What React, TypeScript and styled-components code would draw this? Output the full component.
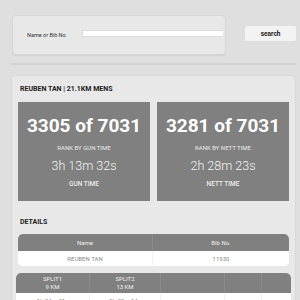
import React from "react";
import styled, { createGlobalStyle } from "styled-components";

const Global = createGlobalStyle`
  html, body { margin: 0; padding: 0; background: #e0dfdf; }
  body { font-family: Roboto, "Liberation Sans", Arial, sans-serif; overflow: hidden; }
  * { box-sizing: border-box; }
`;

const Page = styled.div`
  width: 300px;
  height: 300px;
  padding: 15px 4px 0 11px;
  overflow: hidden;
`;

const SearchRow = styled.div`
  display: flex;
  align-items: center;
  padding-left: 1px;
`;

const SearchPanel = styled.div`
  width: 215px;
  height: 40px;
  background: #e8e8e8;
  border: 1px solid #d6d6d6;
  border-radius: 4px;
  box-shadow: 0 1px 1px rgba(0, 0, 0, 0.06);
  display: flex;
  align-items: center;
  padding: 0 2px 0 14px;
  margin-bottom: -3px;
`;

const Label = styled.label`
  width: 55px;
  font-size: 5.5px;
  color: #333;
`;

const Input = styled.div`
  flex: 1;
  height: 7px;
  margin-top: -3px;
  background: #fff;
  border: 1px solid #ddd;
  border-right: none;
`;

const SearchButton = styled.button`
  margin-left: 19px;
  width: 51px;
  height: 15px;
  background: #f3f3f3;
  border: none;
  border-radius: 2px;
  font-family: inherit;
  font-weight: 700;
  font-size: 6.5px;
  color: #222;
  padding: 0;
`;

const Divider = styled.div`
  margin-top: 11px;
  height: 2px;
  width: 285px;
  background: #d3d3d3;
`;

const Card = styled.div`
  margin-top: 10px;
  width: 285px;
  background: #e8e8e8;
  border: 1px solid #d9d9d9;
  border-radius: 4px;
  padding: 7px 6px 20px 6px;
`;

const Heading = styled.div<{ $top?: number }>`
  margin-top: ${(p) => p.$top ?? 0}px;
  padding-left: 2px;
  font-size: 7px;
  line-height: 10px;
  font-weight: 700;
  color: #1c1c1c;
`;

const Boxes = styled.div`
  margin-top: 8px;
  display: grid;
  grid-template-columns: 132px 132px;
  gap: 7px;
`;

const RankBox = styled.div`
  height: 99px;
  background: #808080;
  display: flex;
  flex-direction: column;
  align-items: center;
  padding-top: 12px;
  color: #fff;
`;

const BigNum = styled.div`
  font-size: 19px;
  line-height: 24px;
  font-weight: 700;
`;

const Small = styled.div<{ $top: number; $size: number; $weight: number }>`
  margin-top: ${(p) => p.$top}px;
  font-size: ${(p) => p.$size}px;
  line-height: 8px;
  font-weight: ${(p) => p.$weight};
  color: #ececec;
`;

const Time = styled.div`
  margin-top: 5px;
  font-size: 12.5px;
  line-height: 18px;
  font-weight: 300;
  color: #f4f4f4;
`;

const Table = styled.div<{ $cols: string; $bleed?: number; $top: number }>`
  margin-top: ${(p) => p.$top}px;
  margin-left: ${(p) => -(p.$bleed ?? 0)}px;
  margin-right: ${(p) => -(p.$bleed ?? 0)}px;
  display: grid;
  grid-template-columns: ${(p) => p.$cols};
  border-radius: 5px;
  overflow: hidden;
  background: #fff;
`;

const Th = styled.div<{ $h: number; $last?: boolean }>`
  height: ${(p) => p.$h}px;
  background: #808080;
  color: #f0f0f0;
  font-size: 6px;
  line-height: 8px;
  display: flex;
  flex-direction: column;
  align-items: center;
  justify-content: center;
  text-align: center;
  border-right: ${(p) => (p.$last ? "none" : "1px solid #8c8c8c")};
`;

const Td = styled.div<{ $h: number; $last?: boolean }>`
  height: ${(p) => p.$h}px;
  background: #fff;
  color: #8a8a8a;
  font-size: 6px;
  display: flex;
  align-items: center;
  justify-content: center;
  border-right: ${(p) => (p.$last ? "none" : "1px solid #f2f2f2")};
`;

const splits = [
  { name: "SPLIT1", dist: "9 KM", time: "1h 04m 31s" },
  { name: "SPLIT2", dist: "13 KM", time: "1h 30m 14s" },
  { name: "", dist: "", time: "" },
  { name: "", dist: "", time: "" },
  { name: "", dist: "", time: "" },
];

export default function App() {
  return (
    <>
      <Global />
      <Page>
        <SearchRow>
          <SearchPanel>
            <Label>Name or Bib No.</Label>
            <Input />
          </SearchPanel>
          <SearchButton>search</SearchButton>
        </SearchRow>
        <Divider />
        <Card>
          <Heading $top={1}>REUBEN TAN | 21.1KM MENS</Heading>
          <Boxes>
            <RankBox>
              <BigNum>3305 of 7031</BigNum>
              <Small $top={6} $size={6} $weight={400}>RANK BY GUN TIME</Small>
              <Time>3h 13m 32s</Time>
              <Small $top={5} $size={6.5} $weight={500}>GUN TIME</Small>
            </RankBox>
            <RankBox>
              <BigNum>3281 of 7031</BigNum>
              <Small $top={6} $size={6} $weight={400}>RANK BY NETT TIME</Small>
              <Time>2h 28m 23s</Time>
              <Small $top={5} $size={6.5} $weight={500}>NETT TIME</Small>
            </RankBox>
          </Boxes>
          <Heading $top={16}>DETAILS</Heading>
          <Table $top={7} $cols="135px 136px">
            <Th $h={17}>Name</Th>
            <Th $h={17} $last>Bib No.</Th>
            <Td $h={15}>REUBEN TAN</Td>
            <Td $h={15} $last>11930</Td>
          </Table>
          <Table $top={7} $bleed={2} $cols="74px 71px 64px 37px 30px">
            {splits.map((s, i) => (
              <Th key={"h" + i} $h={20} $last={i === splits.length - 1}>
                <span>{s.name}</span>
                <span>{s.dist}</span>
              </Th>
            ))}
            {splits.map((s, i) => (
              <Td key={"d" + i} $h={15} $last={i === splits.length - 1}>
                {s.time}
              </Td>
            ))}
          </Table>
        </Card>
      </Page>
    </>
  );
}
